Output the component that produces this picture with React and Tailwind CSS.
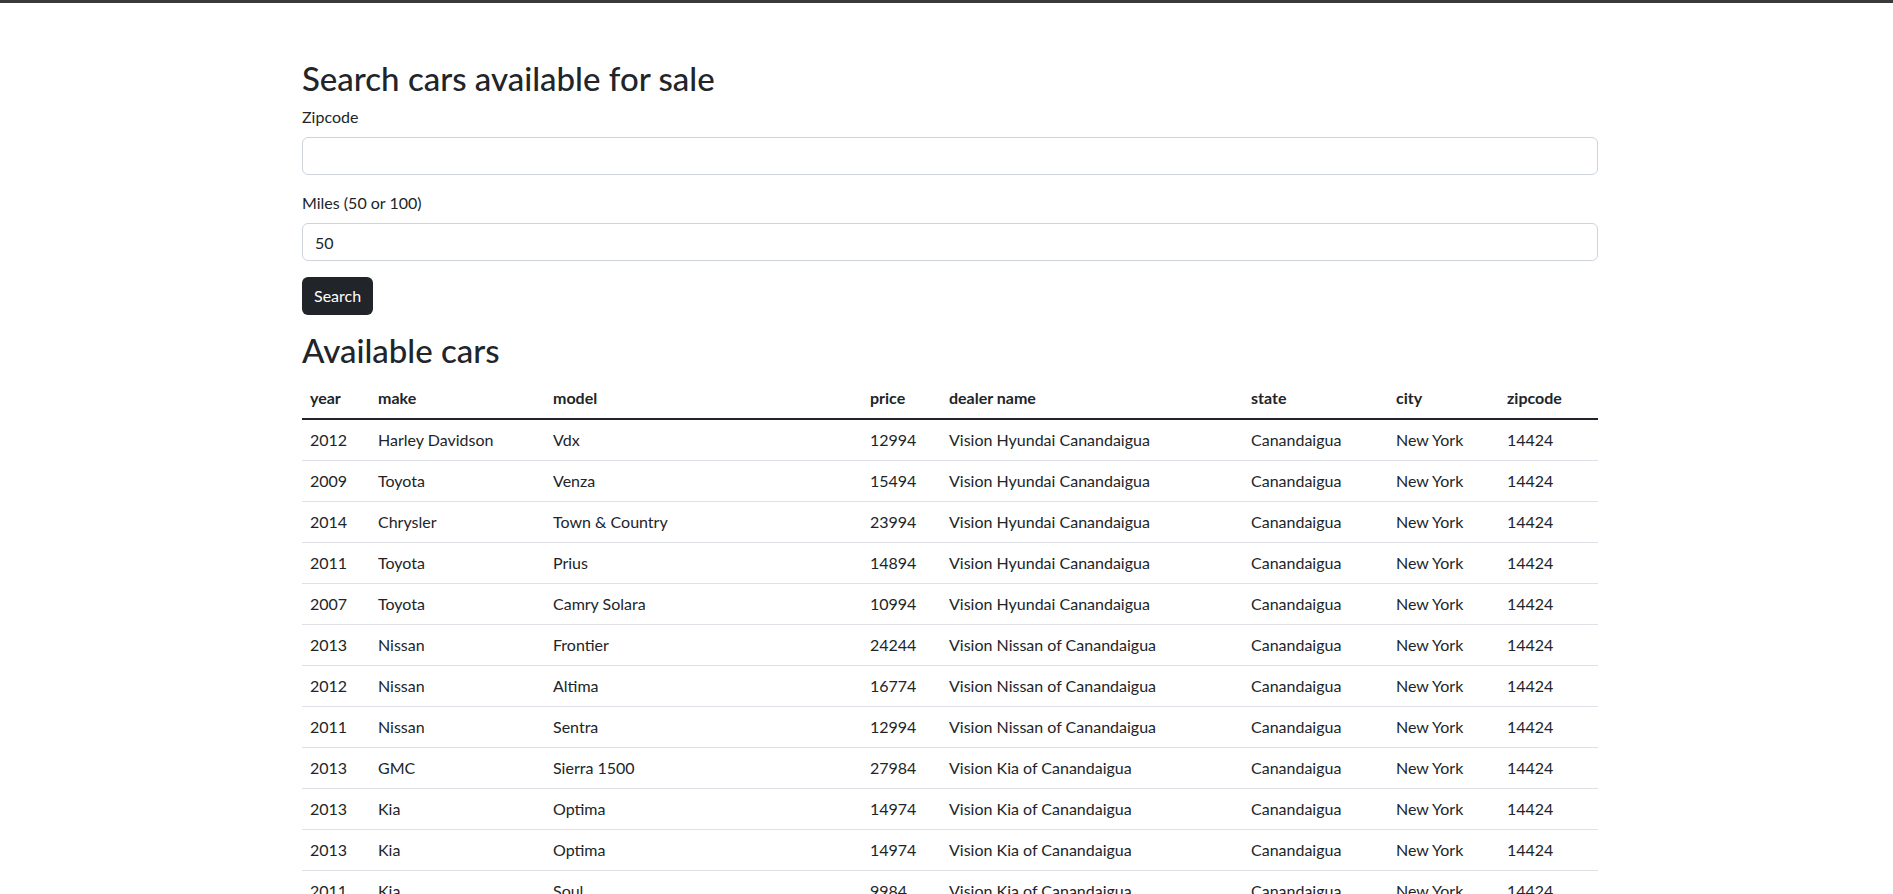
import { useState } from "react";

const cars = [
  ["2012", "Harley Davidson", "Vdx", "12994", "Vision Hyundai Canandaigua"],
  ["2009", "Toyota", "Venza", "15494", "Vision Hyundai Canandaigua"],
  ["2014", "Chrysler", "Town & Country", "23994", "Vision Hyundai Canandaigua"],
  ["2011", "Toyota", "Prius", "14894", "Vision Hyundai Canandaigua"],
  ["2007", "Toyota", "Camry Solara", "10994", "Vision Hyundai Canandaigua"],
  ["2013", "Nissan", "Frontier", "24244", "Vision Nissan of Canandaigua"],
  ["2012", "Nissan", "Altima", "16774", "Vision Nissan of Canandaigua"],
  ["2011", "Nissan", "Sentra", "12994", "Vision Nissan of Canandaigua"],
  ["2013", "GMC", "Sierra 1500", "27984", "Vision Kia of Canandaigua"],
  ["2013", "Kia", "Optima", "14974", "Vision Kia of Canandaigua"],
  ["2013", "Kia", "Optima", "14974", "Vision Kia of Canandaigua"],
  ["2011", "Kia", "Soul", "9984", "Vision Kia of Canandaigua"],
];

const cols = [
  ["year", "w-[68px]"],
  ["make", "w-[175px]"],
  ["model", "w-[317px]"],
  ["price", "w-[79px]"],
  ["dealer name", "w-[302px]"],
  ["state", "w-[145px]"],
  ["city", "w-[111px]"],
  ["zipcode", "w-[99px]"],
];

export default function App() {
  const [zip, setZip] = useState("");
  const [miles, setMiles] = useState("50");

  return (
    <div className="min-h-screen bg-white text-[#212529] font-['Segoe_UI',Lato,'Liberation_Sans',sans-serif] text-base leading-6">
      <div className="h-[3px] bg-[#3a3a3a]" />
      <div className="flex justify-center pl-[7px] pt-[56px]">
        <div className="w-[1296px]">
          <h2 className="text-[33px] leading-[38.4px] font-medium mb-2">Search cars available for sale</h2>
          <form className="mb-4" onSubmit={(e) => e.preventDefault()}>
            <div className="mb-4">
              <label className="block mb-2">Zipcode</label>
              <input
                value={zip}
                onChange={(e) => setZip(e.target.value)}
                className="block w-full h-[38px] px-3 py-1.5 border border-[#ced4da] rounded-md outline-none"
              />
            </div>
            <div className="mb-4">
              <label className="block mb-2">Miles (50 or 100)</label>
              <input
                value={miles}
                onChange={(e) => setMiles(e.target.value)}
                className="block w-full h-[38px] px-3 py-1.5 border border-[#ced4da] rounded-md outline-none"
              />
            </div>
            <button className="h-[38px] px-3 bg-[#212529] text-white rounded-md">Search</button>
          </form>
          <h2 className="text-[33px] leading-[38.4px] font-medium mb-2">Available cars</h2>
          <table className="w-full table-fixed border-collapse">
            <thead>
              <tr className="border-b-2 border-[#212529]">
                {cols.map(([c, w]) => (
                  <th key={c} className={`${w} text-left font-bold p-2 leading-6`}>{c}</th>
                ))}
              </tr>
            </thead>
            <tbody>
              {cars.map((r, i) => (
                <tr key={i} className="border-b border-[#dee2e6]">
                  {[...r, "Canandaigua", "New York", "14424"].map((v, j) => (
                    <td key={j} className="p-2 leading-6">{v}</td>
                  ))}
                </tr>
              ))}
            </tbody>
          </table>
        </div>
      </div>
    </div>
  );
}
